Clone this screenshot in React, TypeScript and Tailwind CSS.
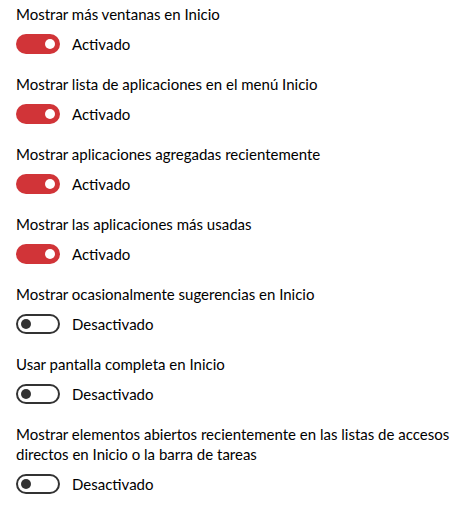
import React from "react";

const items: { title: React.ReactNode; on: boolean }[] = [
  { title: "Mostrar más ventanas en Inicio", on: true },
  { title: "Mostrar lista de aplicaciones en el menú Inicio", on: true },
  { title: "Mostrar aplicaciones agregadas recientemente", on: true },
  { title: "Mostrar las aplicaciones más usadas", on: true },
  { title: "Mostrar ocasionalmente sugerencias en Inicio", on: false },
  { title: "Usar pantalla completa en Inicio", on: false },
  {
    title: (
      <>
        Mostrar elementos abiertos recientemente en las listas de accesos
        <br />
        directos en Inicio o la barra de tareas
      </>
    ),
    on: false,
  },
];

function Toggle({ on }: { on: boolean }) {
  return on ? (
    <div className="w-[44px] h-[20px] rounded-full bg-[#d13438] flex items-center justify-end pr-[5px]">
      <div className="w-[10px] h-[10px] rounded-full bg-white" />
    </div>
  ) : (
    <div className="w-[44px] h-[20px] rounded-full border-2 border-[#333333] flex items-center justify-start pl-[3px]">
      <div className="w-[10px] h-[10px] rounded-full bg-[#333333]" />
    </div>
  );
}

export default function App() {
  return (
    <div
      className="w-[465px] h-[513px] bg-white text-black pl-[16px] pt-[4px] flex flex-col gap-[20px]"
      style={{ fontFamily: "Lato, 'Open Sans', sans-serif" }}
    >
      {items.map((it, i) => (
        <div key={i} className="flex flex-col gap-[10px]">
          <div className="text-[15px] leading-[20px]">{it.title}</div>
          <div className="flex items-center gap-[12px]">
            <Toggle on={it.on} />
            <span className="text-[15px] leading-[20px]">
              {it.on ? "Activado" : "Desactivado"}
            </span>
          </div>
        </div>
      ))}
    </div>
  );
}
